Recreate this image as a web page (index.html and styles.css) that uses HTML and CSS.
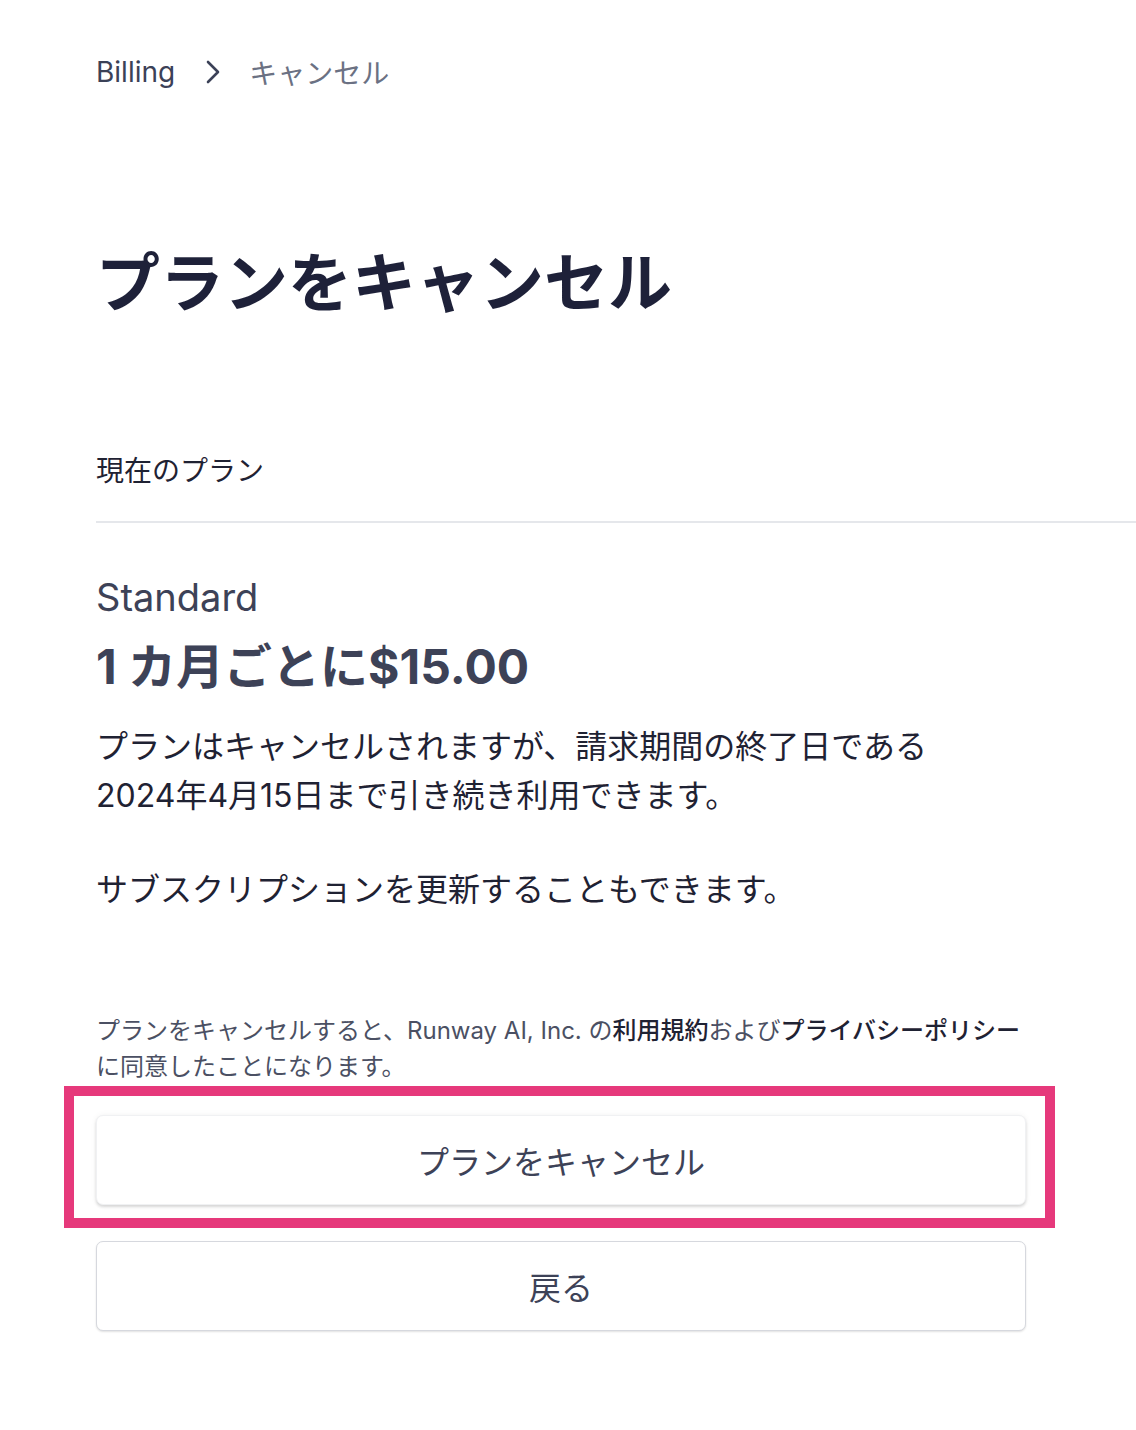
FILE: index.html
```html
<!DOCTYPE html>
<html lang="ja">
<head>
  <meta charset="UTF-8">
  <meta name="viewport" content="width=device-width, initial-scale=1.0">
  <title>プランをキャンセル</title>

  <link rel="stylesheet" href="styles.css">
</head>
<body>
  <div class="page">

    <nav class="crumbs">
      <a class="crumb-link" href="#">Billing</a>
      <svg class="crumb-sep" width="18" height="26" viewBox="0 0 18 26">
        <path d="M4 3 L14 13 L4 23" fill="none" stroke="#3b4157" stroke-width="2.6" stroke-linecap="round" stroke-linejoin="round"/>
      </svg>
      <span class="crumb-current">キャンセル</span>
    </nav>

    <h1 class="title">プランをキャンセル</h1>

    <div class="section-head">現在のプラン</div>

    <div class="content">
      <div class="plan-name">Standard</div>
      <div class="plan-price">1 カ月ごとに$15.00</div>

      <p class="note">プランはキャンセルされますが、請求期間の終了日である<br>2024年4月15日まで引き続き利用できます。</p>
      <p class="note second">サブスクリプションを更新することもできます。</p>

      <p class="legal">プランをキャンセルすると、Runway AI, Inc. の<a href="#">利用規約</a>および<a href="#">プライバシーポリシー</a>に同意したことになります。</p>

      <div class="actions">
        <div class="highlight">
          <button class="btn btn-main">プランをキャンセル</button>
        </div>
        <button class="btn btn-back">戻る</button>
      </div>
    </div>

  </div>
</body>
</html>
```

FILE: styles.css
```css
body {
  margin: 0;
  background: #fff;
  font-family: Inter, "Noto Sans CJK JP", sans-serif;
  color: #1f2233;
}

.page {
  padding: 54px 0 100px 96px;
}

/* breadcrumb */
.crumbs {
  display: flex;
  align-items: center;
  height: 36px;
  font-size: 28px;
}
.crumb-link {
  color: #3b4157;
  text-decoration: none;
}
.crumb-sep {
  margin: 0 27px 0 29px;
}
.crumb-current {
  color: #6b7183;
}

.title {
  margin: 153px 0 0 0;
  font-size: 64px;
  line-height: 80px;
  font-weight: 700;
  color: #1e2139;
}

.section-head {
  margin-top: 130px;
  padding-bottom: 32px;
  font-size: 28px;
  line-height: 36px;
  border-bottom: 2px solid #e5e7eb;
}

.content {
  width: 930px;
}

.plan-name {
  margin-top: 51px;
  font-size: 38px;
  line-height: 46px;
  color: #3d4257;
}
.plan-price {
  margin-top: 18px;
  font-size: 48px;
  line-height: 58px;
  font-weight: 700;
  color: #3d4257;
}

.note {
  margin: 26px 0 0 0;
  font-size: 32px;
  line-height: 49px;
  color: #1f2233;
}
.note.second {
  margin-top: 45px;
}

.legal {
  margin: 99px 0 0 0;
  font-size: 24px;
  line-height: 36px;
  color: #4b5063;
}
.legal a {
  color: #1f2233;
  font-weight: 500;
  text-decoration: none;
}

.actions {
  margin-top: 30px;
  display: flex;
  flex-direction: column;
  gap: 36px;
}

.highlight {
  position: relative;
}
.highlight::after {
  content: "";
  position: absolute;
  top: -29px;
  right: -29px;
  bottom: -23px;
  left: -32px;
  border: 10px solid #e6397b;
  pointer-events: none;
}

.btn {
  display: block;
  width: 100%;
  height: 90px;
  background: #fff;
  border-radius: 7px;
  font-family: Inter, "Noto Sans CJK JP", sans-serif;
  font-size: 32px;
  color: #3d4257;
  cursor: pointer;
}
.btn-main {
  border: 1px solid #f0f1f3;
  box-shadow: 0 2px 3px rgba(0, 0, 0, 0.14), 0 0 6px rgba(0, 0, 0, 0.05);
}
.btn-back {
  border: 1px solid #d6d8de;
  box-shadow: 0 1px 2px rgba(0, 0, 0, 0.12);
}
```
